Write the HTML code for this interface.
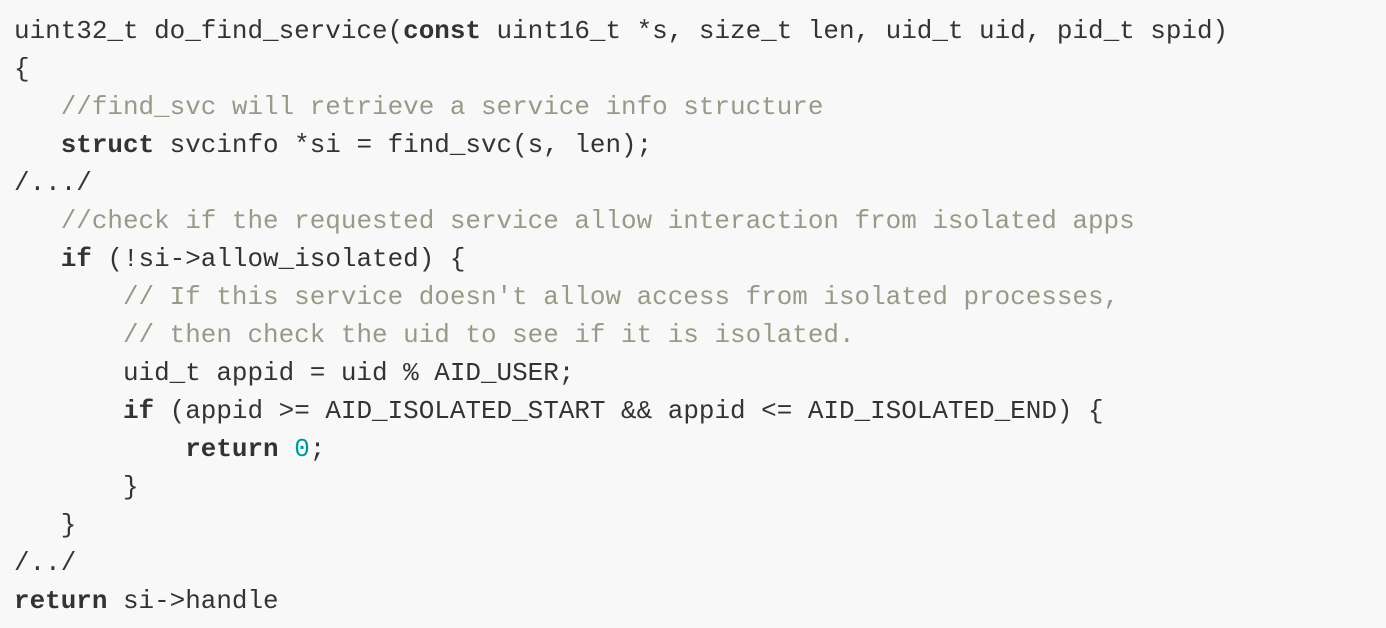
<!DOCTYPE html>
<html><head><style>
html,body{margin:0;padding:0;background:#f8f8f8;width:1386px;height:628px;overflow:hidden}
pre{margin:0;position:absolute;left:14px;top:12px;font-family:"Liberation Mono",monospace;font-size:25.95px;line-height:38px;color:#333}
b{font-weight:bold;color:#333}
.c{color:#998}
.n{color:#099}
</style></head><body>
<pre>uint32_t do_find_service(<b>const</b> uint16_t *s, size_t len, uid_t uid, pid_t spid)
{
   <span class="c">//find_svc will retrieve a service info structure</span>
   <b>struct</b> svcinfo *si = find_svc(s, len);
/.../
   <span class="c">//check if the requested service allow interaction from isolated apps</span>
   <b>if</b> (!si-&gt;allow_isolated) {
       <span class="c">// If this service doesn't allow access from isolated processes,</span>
       <span class="c">// then check the uid to see if it is isolated.</span>
       uid_t appid = uid % AID_USER;
       <b>if</b> (appid &gt;= AID_ISOLATED_START &amp;&amp; appid &lt;= AID_ISOLATED_END) {
           <b>return</b> <span class="n">0</span>;
       }
   }
/../
<b>return</b> si-&gt;handle</pre>
</body></html>
